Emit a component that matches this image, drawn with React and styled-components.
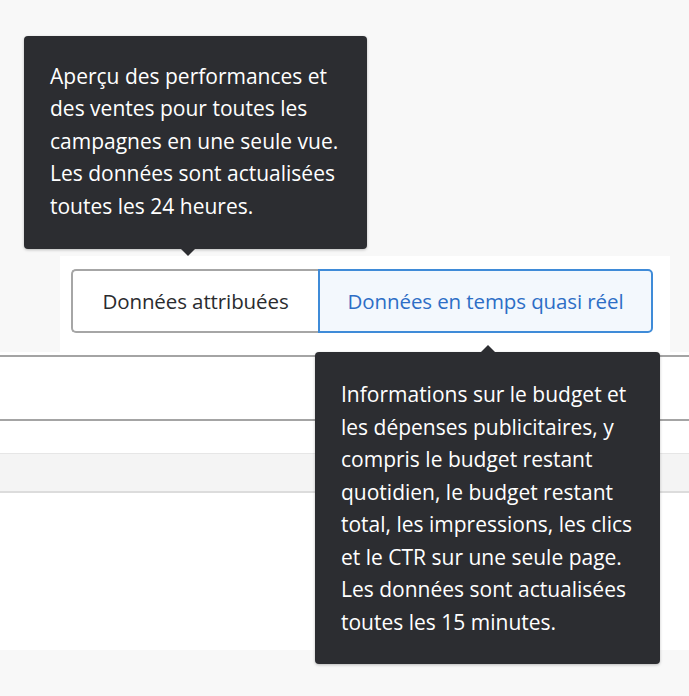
import styled, { createGlobalStyle } from "styled-components";

const GlobalStyle = createGlobalStyle`
  html, body {
    margin: 0;
    padding: 0;
    background: #f8f8f8;
  }
  body {
    font-family: "Open Sans", "Noto Sans", sans-serif;
  }
`

const Page = styled.div`
  width: 689px;
  height: 696px;
  overflow: hidden;
  background: #f8f8f8;
`

const Header = styled.div`
  height: 256px;
`

const ToolbarRow = styled.div`
  display: flex;
`

const Panel = styled.div`
  margin-left: 60px;
  width: 610px;
  box-sizing: border-box;
  padding: 13px 17px 19px 11px;
  background: #fff;
`

const Segmented = styled.div`
  display: flex;
  height: 64px;
`

const SegWrap = styled.div`
  position: relative;
  display: flex;
  width: ${(p) => p.$width}px;
`

const SegButton = styled.button`
  flex: 1;
  box-sizing: border-box;
  font-family: "Open Sans", "Noto Sans", sans-serif;
  font-size: 20.5px;
  letter-spacing: -0.1px;
  cursor: pointer;
  padding: 0;
  background: ${(p) => (p.$active ? "#f3f8fd" : "#fff")};
  color: ${(p) => (p.$active ? "#2d6ec6" : "#2a2b2e")};
  border: 2px solid ${(p) => (p.$active ? "#3f8bd8" : "#a6a6a6")};
  border-right: ${(p) => (p.$active ? "2px solid #3f8bd8" : "none")};
  border-radius: ${(p) => (p.$active ? "0 5px 5px 0" : "5px 0 0 5px")};
`

const Tooltip = styled.div`
  position: absolute;
  z-index: 5;
  box-sizing: border-box;
  width: ${(p) => p.$width}px;
  left: ${(p) => p.$left}px;
  ${(p) => (p.$above ? "bottom: calc(100% + 20px);" : "top: calc(100% + 19px);")}
  padding: ${(p) => p.$pad};
  background: #2c2d31;
  color: #fff;
  border-radius: 4px;
  box-shadow: 0 1px 3px rgba(0, 0, 0, 0.25);
  font-size: 21px;
  letter-spacing: 0;
  line-height: 32.5px;
  text-align: left;
  white-space: nowrap;

  &::after {
    content: "";
    position: absolute;
    left: ${(p) => p.$arrow}px;
    ${(p) => (p.$above ? "top: 100%;" : "bottom: 100%;")}
    border-left: 7px solid transparent;
    border-right: 7px solid transparent;
    ${(p) =>
      p.$above
        ? "border-top: 7px solid #2c2d31;"
        : "border-bottom: 7px solid #2c2d31;"}
  }
`

const Table = styled.div`
  background: #fff;
  padding-top: 3px;
`

const HeadRow = styled.div`
  height: 62px;
  border-top: 2px solid #a4a4a4;
  border-bottom: 2px solid #a4a4a4;
`

const Spacer = styled.div`
  height: 32px;
`

const Band = styled.div`
  height: 37px;
  background: #f4f4f4;
  border-top: 1px solid #e6e6e6;
  border-bottom: 2px solid #dcdcdc;
`

const BodyRow = styled.div`
  height: 157px;
`

function App() {
  return (
    <Page>
      <GlobalStyle />
      <Header />
      <ToolbarRow>
        <Panel>
          <Segmented>
            <SegWrap $width={247}>
              <SegButton>Données attribuées</SegButton>
              <Tooltip $above $width={343} $left={-47} $arrow={157} $pad="24px 6px 27px 26px">
                Aperçu des performances et<br />
                des ventes pour toutes les<br />
                campagnes en une seule vue.<br />
                Les données sont actualisées<br />
                toutes les 24 heures.
              </Tooltip>
            </SegWrap>
            <SegWrap $width={335}>
              <SegButton $active>Données en temps quasi réel</SegButton>
              <Tooltip $width={345} $left={-3} $arrow={166} $pad="26px 6px 26px 26px">
                Informations sur le budget et<br />
                les dépenses publicitaires, y<br />
                compris le budget restant<br />
                quotidien, le budget restant<br />
                total, les impressions, les clics<br />
                et le CTR sur une seule page.<br />
                Les données sont actualisées<br />
                toutes les 15 minutes.
              </Tooltip>
            </SegWrap>
          </Segmented>
        </Panel>
      </ToolbarRow>
      <Table>
        <HeadRow />
        <Spacer />
        <Band />
        <BodyRow />
      </Table>
    </Page>
  );
}

export default App;
